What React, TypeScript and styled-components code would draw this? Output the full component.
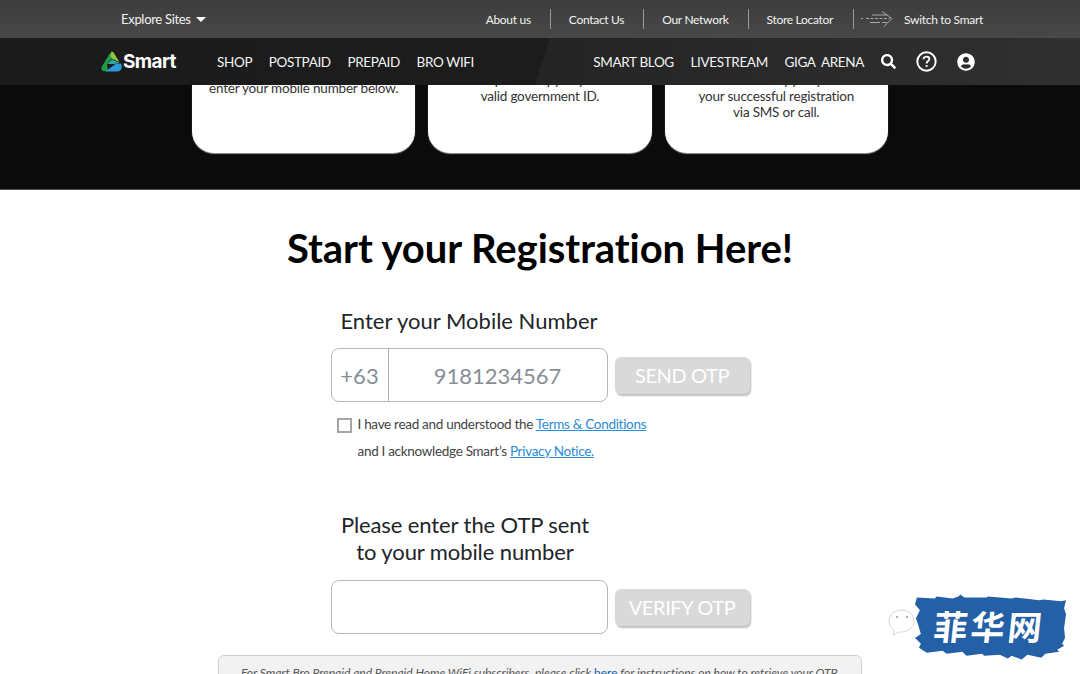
import styled, { createGlobalStyle } from 'styled-components';
import { FaSearch, FaUserCircle } from 'react-icons/fa';

const GlobalStyle = createGlobalStyle`
  html, body {
    margin: 0;
    height: 674px;
    overflow: hidden;
    background: #fff;
    font-family: Lato, 'Liberation Sans', sans-serif;
    font-variant-ligatures: none;
  }
  * { box-sizing: border-box; }
`;

const App = () => {
  return (
    <Page>
      <GlobalStyle />
      <TopBar>
        <Explore>
          Explore Sites
          <Caret />
        </Explore>
        <TopLinks>
          <TopLink>About us</TopLink>
          <Divider />
          <TopLink>Contact Us</TopLink>
          <Divider />
          <TopLink>Our Network</TopLink>
          <Divider />
          <TopLink>Store Locator</TopLink>
          <Divider $tight />
          <SwitchArrow />
          <TopLink>Switch to Smart</TopLink>
        </TopLinks>
      </TopBar>

      <NavBar>
        <NavLeft>
          <Logo>
            <LogoMark />
            <LogoWord>Smart</LogoWord>
          </Logo>
          <NavItems>
            <NavLink>SHOP</NavLink>
            <NavLink>POSTPAID</NavLink>
            <NavLink>PREPAID</NavLink>
            <NavLink>BRO WIFI</NavLink>
          </NavItems>
        </NavLeft>
        <NavRight>
          <NavItems>
            <NavLink>SMART BLOG</NavLink>
            <NavLink>LIVESTREAM</NavLink>
            <NavLink>GIGA&nbsp; ARENA</NavLink>
          </NavItems>
          <NavIcons>
            <FaSearch size={15} color="#fff" />
            <HelpIcon />
            <FaUserCircle size={18} color="#fff" />
          </NavIcons>
        </NavRight>
      </NavBar>

      <Band>
        <Card $shift={-21}>
          <CardText>
            To get started, please
            <br />
            enter your mobile number below.
          </CardText>
        </Card>
        <Card $shift={-13}>
          <CardText>
            Prepare a copy of your
            <br />
            valid government ID.
          </CardText>
        </Card>
        <Card $shift={-13}>
          <CardText>
            Wait for a copy of your
            <br />
            your successful registration
            <br />
            via SMS or call.
          </CardText>
        </Card>
      </Band>

      <Main>
        <Title>Start your Registration Here!</Title>
        <Form>
          <Heading>Enter your Mobile Number</Heading>
          <InputRow>
            <InputBox>
              <Prefix>+63</Prefix>
              <Placeholder>9181234567</Placeholder>
            </InputBox>
            <OtpButton>SEND OTP</OtpButton>
          </InputRow>
          <Consent>
            <CheckBox />
            <ConsentText>
              <ConsentLine>
                I have read and understood the <Anchor>Terms &amp; Conditions</Anchor>
              </ConsentLine>
              <ConsentLine>
                and I acknowledge Smart’s <Anchor>Privacy Notice.</Anchor>
              </ConsentLine>
            </ConsentText>
          </Consent>
          <OtpHeading>
            Please enter the OTP sent
            <br />
            to your mobile number
          </OtpHeading>
          <InputRow>
            <InputBox />
            <OtpButton>VERIFY OTP</OtpButton>
          </InputRow>
        </Form>
        <Notice>
          <NoticeText>
            For Smart Bro Prepaid and Prepaid Home WiFi subscribers, please click <NoticeLink>here</NoticeLink> for
            instructions on how to retrieve your OTP.
          </NoticeText>
        </Notice>
      </Main>

      <Watermark>
        <BubbleIcon />
        <BrushIcon />
        <WatermarkText>菲华网</WatermarkText>
      </Watermark>
    </Page>
  );
};

const SwitchArrow = () => (
  <ArrowSvg viewBox="0 0 33 18" fill="none" stroke="#a8a8a8" strokeWidth="1">
    <path d="M22 1.5 L32 8.5 L24 16.5" />
    <path d="M12 5 H27" />
    <path d="M1 8.5 H3 M6 8.5 H30" strokeDasharray="3 1.5" />
    <path d="M10 12.5 H20 M22 12.5 H27" />
  </ArrowSvg>
);

const LogoMark = () => (
  <svg width="21" height="21" viewBox="0 0 21 21">
    <path d="M10.5 0.5 C11.8 0.5 12.6 1.4 13.4 2.8 L18.4 11 L11.5 8 L8 6 Z" fill="#8cc63f" />
    <path d="M9 2 L3 12 C1.5 14.6 0 16 0.5 18 C0.8 19.6 2 20.3 4 20.3 L7 20 L6 13 L10.5 8 Z" fill="#1f9a45" />
    <path d="M6 13 L11 8.5 L19 12 L13 13 Z" fill="#35a9a0" />
    <path d="M5 20 L14.5 13 L20 12.5 C21 15 21 17 20 18.5 C19 20 17.5 20.4 16 20.4 H5 Z" fill="#2c9bd8" />
  </svg>
);

const HelpIcon = () => (
  <svg width="21" height="21" viewBox="0 0 21 21" fill="none" stroke="#fff">
    <circle cx="10.5" cy="10.5" r="9.2" strokeWidth="1.9" />
    <path d="M7.6 8.3 C7.6 6.6 8.9 5.6 10.5 5.6 C12.2 5.6 13.4 6.6 13.4 8.1 C13.4 10 10.6 10 10.6 12.4" strokeWidth="1.9" />
    <path d="M10.6 14.1 V15.9" strokeWidth="2" />
  </svg>
);

const BubbleIcon = () => (
  <BubbleSvg viewBox="0 0 30 30" fill="#fff" stroke="#c9c9c9" strokeWidth="0.8">
    <path d="M14 3 C6 3 1 8 1 14 C1 18 3 21 6 23 L5 28 L11 25 C18 26 26 21 26 14 C26 8 21 3 14 3 Z" />
    <circle cx="9" cy="10" r="1.2" fill="#b5b5b5" stroke="none" />
    <circle cx="19" cy="10" r="1.2" fill="#b5b5b5" stroke="none" />
  </BubbleSvg>
);

const BrushIcon = () => (
  <BrushSvg viewBox="0 0 158 70">
    <path
      fill="#2360a5"
      d="M4 3 L22 4 L24 2 L40 4 L46 2 L48 0 L52 3 L74 3 L76 2 L100 4 L104 3 L128 6 L132 5 L150 7 L155 6 L153 14 L155 20 L153 34 L154 44 L151 50 L153 52 L146 56 L148 58 L134 60 L130 64 L116 61 L110 66 L100 62 L96 65 L88 61 L72 62 L70 60 L54 62 L50 58 L34 60 L30 57 L14 59 L6 54 L8 50 L2 44 L8 40 L5 30 L3 24 L7 16 L2 10 Z"
    />
  </BrushSvg>
);

const Page = styled.div`
  position: relative;
  width: 1080px;
  height: 674px;
  overflow: hidden;
`;

const TopBar = styled.div`
  height: 38px;
  padding: 0 97px 0 121px;
  display: flex;
  align-items: center;
  justify-content: space-between;
  background: linear-gradient(#3d3d3d, #484848);
  color: #f2f2f2;
`;

const Explore = styled.div`
  display: flex;
  align-items: center;
  font-size: 13px;
  letter-spacing: -0.3px;
`;

const Caret = styled.span`
  width: 0;
  height: 0;
  margin-left: 5px;
  border-left: 5px solid transparent;
  border-right: 5px solid transparent;
  border-top: 5px solid #fff;
`;

const TopLinks = styled.div`
  display: flex;
  align-items: center;
`;

const TopLink = styled.span`
  font-size: 12px;
  letter-spacing: -0.3px;
  white-space: nowrap;
`;

const Divider = styled.span<{ $tight?: boolean }>`
  width: 1px;
  height: 20px;
  margin: ${(props) => (props.$tight ? '0 6px 0 20px' : '0 18px 0 19px')};
  background: #9a9a9a;
`;

const ArrowSvg = styled.svg`
  width: 33px;
  height: 18px;
  margin-right: 11px;
`;

const NavBar = styled.nav`
  position: relative;
  z-index: 2;
  height: 47px;
  padding: 0 105px 0 101px;
  display: flex;
  align-items: center;
  justify-content: space-between;
  background: linear-gradient(90deg, #1b1b1b, #1e1e1e);

  &::before {
    content: '';
    position: absolute;
    inset: 0 0 0 535px;
    background: linear-gradient(90deg, #242424, #303030);
    clip-path: polygon(15px 0, 100% 0, 100% 100%, 0 100%);
  }
`;

const NavLeft = styled.div`
  position: relative;
  display: flex;
  align-items: center;
`;

const NavRight = styled.div`
  position: relative;
  display: flex;
  align-items: center;
`;

const Logo = styled.div`
  width: 116px;
  display: flex;
  align-items: center;
  gap: 1px;
`;

const LogoWord = styled.span`
  font-family: Inter, 'Open Sans', sans-serif;
  font-size: 19px;
  font-weight: 700;
  letter-spacing: -0.6px;
  color: #fff;
`;

const NavItems = styled.div`
  display: flex;
  align-items: center;
  gap: 16.6px;
`;

const NavLink = styled.span`
  font-size: 13.5px;
  letter-spacing: -0.35px;
  color: #f4f4f4;
  white-space: nowrap;
`;

const NavIcons = styled.div`
  margin-left: 17px;
  display: flex;
  align-items: center;
  gap: 20px;
`;

const Band = styled.section`
  height: 105px;
  padding-left: 192px;
  display: flex;
  gap: 13px;
  overflow: hidden;
  background: #0b0b0b;
  border-bottom: 1px solid #555;
`;

const Card = styled.div<{ $shift: number }>`
  width: 223.3px;
  height: 68px;
  overflow: hidden;
  background: #fff;
  border-radius: 0 0 22px 22px;
  box-shadow: 0 1px 1px #999;

  & > p {
    margin-top: ${(props) => props.$shift}px;
  }
`;

const CardText = styled.p`
  margin: 0;
  font-size: 13.5px;
  line-height: 16px;
  letter-spacing: -0.2px;
  text-align: center;
  color: #333;
`;

const Main = styled.main`
  display: flex;
  flex-direction: column;
  align-items: center;
`;

const Title = styled.h1`
  margin: 33px 0 0;
  font-size: 40px;
  line-height: 50px;
  font-weight: 700;
  letter-spacing: -0.05px;
  color: #000;
`;

const Form = styled.div`
  width: 419px;
  margin-top: 33px;
`;

const Heading = styled.h2`
  width: 277px;
  margin: 0 0 12px;
  font-size: 22px;
  line-height: 30px;
  font-weight: 400;
  text-align: center;
  color: #212529;
`;

const OtpHeading = styled(Heading)`
  width: 269px;
  margin: 46px 0 15px;
  line-height: 27px;
  letter-spacing: -0.1px;
`;

const InputRow = styled.div`
  display: flex;
  align-items: center;
  gap: 7px;
`;

const InputBox = styled.div`
  width: 277px;
  height: 54px;
  display: flex;
  align-items: center;
  background: #fff;
  border: 1px solid #b8b8b8;
  border-radius: 8px;
  font-size: 22px;
  color: #868e96;
`;

const Prefix = styled.span`
  width: 57px;
  height: 100%;
  display: flex;
  align-items: center;
  justify-content: center;
  border-right: 1px solid #b0b0b0;
`;

const Placeholder = styled.span`
  flex: 1;
  text-align: center;
`;

const OtpButton = styled.button`
  width: 135px;
  height: 37px;
  padding: 0;
  border: none;
  border-radius: 6px;
  background: #d9d9d9;
  box-shadow: 1px 2px 2px #bcbcbc;
  color: #fff;
  font-family: inherit;
  font-size: 20px;
  letter-spacing: -0.4px;
`;

const Consent = styled.div`
  margin: 9px 0 0 6px;
  display: flex;
  align-items: flex-start;
  gap: 6px;
`;

const CheckBox = styled.span`
  flex: none;
  width: 15px;
  height: 15px;
  margin-top: 7px;
  border: 2px solid #a6a6a6;
`;

const ConsentText = styled.div`
  font-size: 13.5px;
  line-height: 27px;
  letter-spacing: -0.3px;
  color: #444;
`;

const ConsentLine = styled.div`
  white-space: nowrap;
`;

const Anchor = styled.a`
  color: #2a8bd6;
  text-decoration: underline;
`;

const Notice = styled.div`
  width: 644px;
  height: 60px;
  margin-top: 21px;
  padding-top: 9px;
  background: #f2f2f2;
  border: 1px solid #d0d0d0;
  border-radius: 6px;
  text-align: center;
`;

const NoticeText = styled.p`
  margin: 0;
  font-size: 12px;
  line-height: 16px;
  font-style: italic;
  color: #555;
`;

const NoticeLink = styled.a`
  color: #2462b0;
  font-style: normal;
  text-decoration: underline;
`;

const Watermark = styled.div`
  position: absolute;
  left: 888px;
  top: 592px;
  width: 192px;
  height: 74px;
`;

const BubbleSvg = styled.svg`
  position: absolute;
  left: 0;
  top: 15px;
  width: 30px;
  height: 30px;
`;

const BrushSvg = styled.svg`
  position: absolute;
  left: 25px;
  top: 2px;
  width: 156px;
  height: 70px;
`;

const WatermarkText = styled.span`
  position: absolute;
  left: 46px;
  top: 12px;
  font-family: 'Noto Sans CJK SC', sans-serif;
  font-size: 34px;
  line-height: 44px;
  font-weight: 700;
  letter-spacing: 3px;
  color: #fff;
  transform: skewX(-6deg);
`;

export default App;
